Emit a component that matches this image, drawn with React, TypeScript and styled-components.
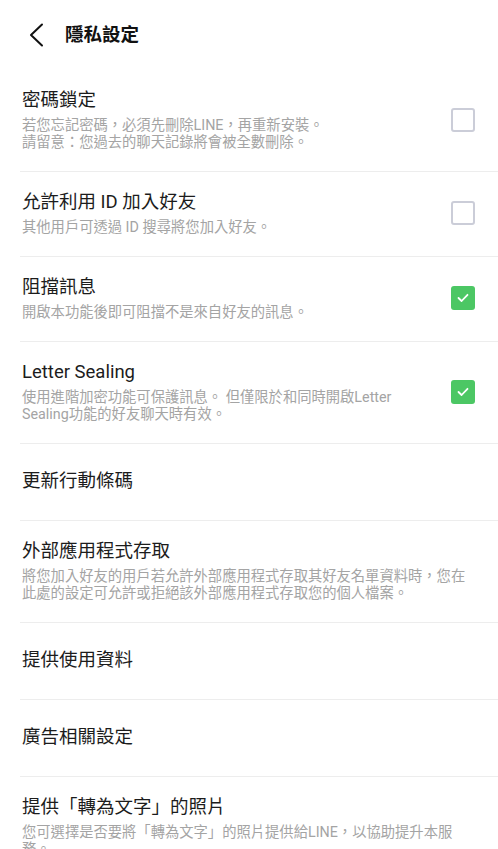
import React from 'react'
import styled, { createGlobalStyle } from 'styled-components'

const GlobalStyle = createGlobalStyle`
  html, body {
    margin: 0;
    padding: 0;
    background: #ffffff;
  }
  body {
    font-family: 'Roboto', 'Noto Sans CJK TC', sans-serif;
    -webkit-font-smoothing: antialiased;
  }
`

type Setting = {
  title: string
  lines?: string[]
  checked?: boolean
}

const settings: Setting[] = [
  {
    title: '密碼鎖定',
    lines: ['若您忘記密碼，必須先刪除LINE，再重新安裝。', '請留意：您過去的聊天記錄將會被全數刪除。'],
    checked: false,
  },
  { title: '允許利用 ID 加入好友', lines: ['其他用戶可透過 ID 搜尋將您加入好友。'], checked: false },
  { title: '阻擋訊息', lines: ['開啟本功能後即可阻擋不是來自好友的訊息。'], checked: true },
  {
    title: 'Letter Sealing',
    lines: ['使用進階加密功能可保護訊息。 但僅限於和同時開啟Letter Sealing功能的好友聊天時有效。'],
    checked: true,
  },
  { title: '更新行動條碼' },
  {
    title: '外部應用程式存取',
    lines: ['將您加入好友的用戶若允許外部應用程式存取其好友名單資料時，您在此處的設定可允許或拒絕該外部應用程式存取您的個人檔案。'],
  },
  { title: '提供使用資料' },
  { title: '廣告相關設定' },
  {
    title: '提供「轉為文字」的照片',
    lines: ['您可選擇是否要將「轉為文字」的照片提供給LINE，以協助提升本服務。'],
  },
]

const CheckBox: React.FC<{ checked?: boolean }> = ({ checked }) => (
  <Box checked={checked}>
    {checked && (
      <svg width="12" height="10" viewBox="0 0 12 10" fill="none">
        <polyline points="1.5,5 4.6,8 10.5,1.8" stroke="#ffffff" strokeWidth="1.8" strokeLinecap="round" strokeLinejoin="round" />
      </svg>
    )}
  </Box>
)

const App: React.FC = () => {
  return (
    <Page>
      <GlobalStyle />
      <Header>
        <BackButton aria-label="back">
          <svg width="16" height="24" viewBox="0 0 16 24" fill="none">
            <polyline points="14,1.5 3,12 14,22.5" stroke="#111111" strokeWidth="2" strokeLinecap="round" strokeLinejoin="round" />
          </svg>
        </BackButton>
        <HeaderTitle>隱私設定</HeaderTitle>
      </Header>
      <List>
        {settings.map((item) => (
          <Row key={item.title}>
            <TextBlock>
              <ItemTitle>{item.title}</ItemTitle>
              {item.lines && (
                <Description>
                  {item.lines.map((line) => (
                    <DescLine key={line}>{line}</DescLine>
                  ))}
                </Description>
              )}
            </TextBlock>
            {item.checked !== undefined && <CheckBox checked={item.checked} />}
          </Row>
        ))}
      </List>
    </Page>
  )
}

const Page = styled.div`
  width: 498px;
  min-height: 849px;
  background: #ffffff;
  color: #1a1a1a;
`

const Header = styled.header`
  display: flex;
  align-items: center;
  height: 70px;
  padding-left: 28px;
  box-sizing: border-box;
`

const BackButton = styled.button`
  display: flex;
  align-items: center;
  justify-content: center;
  padding: 0;
  border: none;
  background: none;
  width: 16px;
  height: 24px;
  cursor: pointer;
`

const HeaderTitle = styled.h1`
  margin: 0 0 0 21px;
  font-size: 18.5px;
  font-weight: 700;
  line-height: 24px;
  color: #111111;
`

const List = styled.div`
  display: flex;
  flex-direction: column;
`

const Row = styled.div`
  display: flex;
  align-items: center;
  gap: 18px;
  margin-left: 20px;
  padding: 18px 23px 20px 2px;
  min-height: 77px;
  box-sizing: border-box;
  border-bottom: 1px solid #ededed;
`

const TextBlock = styled.div`
  flex: 1;
  min-width: 0;
  max-width: 446px;
  display: flex;
  flex-direction: column;
  gap: 5px;
`

const ItemTitle = styled.div`
  font-size: 18.5px;
  line-height: 24px;
  color: #1c1c1c;
`

const Description = styled.div`
  display: flex;
  flex-direction: column;
`

const DescLine = styled.div`
  font-size: 14.3px;
  line-height: 17px;
  color: #a4a4a4;
`

const Box = styled.div<{ checked?: boolean }>`
  flex: none;
  display: flex;
  align-items: center;
  justify-content: center;
  width: 24px;
  height: 24px;
  box-sizing: border-box;
  border-radius: 3px;
  background: ${({ checked }) => (checked ? '#4cc764' : '#ffffff')};
  border: ${({ checked }) => (checked ? 'none' : '2px solid #cbcdd8')};
`

export default App
